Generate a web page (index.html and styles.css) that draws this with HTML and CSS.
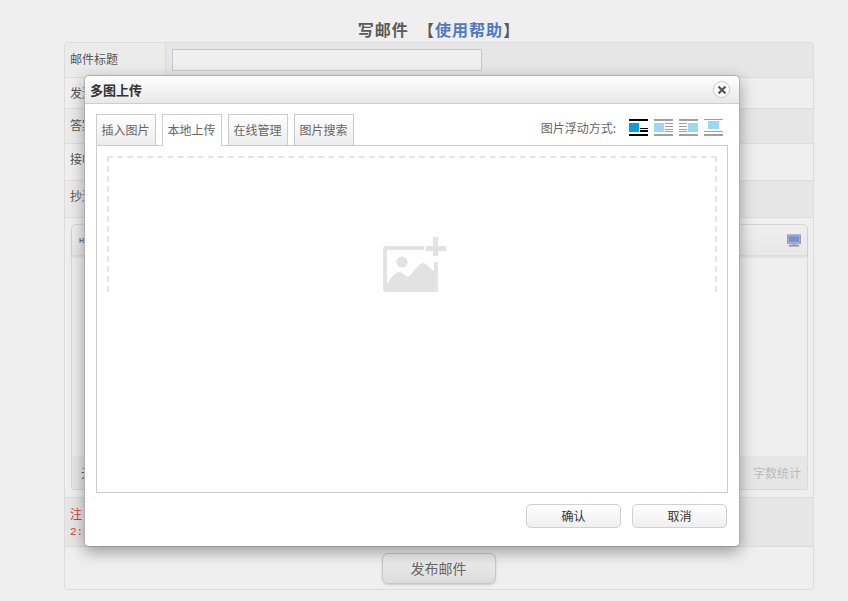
FILE: index.html
```html
<!DOCTYPE html>
<html lang="zh-CN">
<head>
<meta charset="utf-8">
<title>写邮件</title>
<link rel="stylesheet" href="styles.css">
</head>
<body>
<h1 class="page-title">写邮件 &nbsp;【<a class="help" href="#">使用帮助</a>】</h1>
<div class="form">
  <div class="row row-a h35"><div class="label">邮件标题</div><div class="value"><input class="text-input" type="text"></div></div>
  <div class="row row-b h31"><div class="label">发送人</div><div class="value"></div></div>
  <div class="row row-a h35"><div class="label">答案</div><div class="value"></div></div>
  <div class="row row-b h37"><div class="label">接收人</div><div class="value"></div></div>
  <div class="row row-a h37"><div class="label">抄送人</div><div class="value"></div></div>
  <div class="editor-row">
    <div class="editor">
      <div class="toolbar"><span class="html-btn">HTML</span>
        <svg class="monitor" width="14" height="13" viewBox="0 0 15 13"><rect x="0.500" y="0.500" width="14" height="9" fill="#a9b4d0" stroke="#8d99ad"/><rect x="2" y="2" width="11" height="6" fill="#7c8fd0"/><rect x="6" y="10" width="3" height="1" fill="#8a96ae"/><rect x="2" y="11" width="11" height="2" fill="#8a96ae"/></svg>
      </div>
      <div class="editor-body"></div>
      <div class="status"><span class="status-left">元素路径</span><span class="count">字数统计</span></div>
    </div>
  </div>
  <div class="row-a notes"><div class="note-1">注：邮件内容</div><div class="note-2">2:邮件内容</div></div>
  <div class="submit-row"><button class="submit" type="button">发布邮件</button></div>
</div>

<div class="dialog">
  <div class="dialog-head"><span class="dialog-title">多图上传</span>
    <span class="close"><svg width="10" height="10" viewBox="0 0 10 10"><path d="M1.500 1.500l7 7M8.500 1.500l-7 7" stroke="#555" stroke-width="2.200" fill="none"/></svg></span>
  </div>
  <div class="dialog-body">
    <div class="tab-bar">
      <div class="tab">插入图片</div>
      <div class="tab active">本地上传</div>
      <div class="tab">在线管理</div>
      <div class="tab">图片搜索</div>
      <div class="float-group">
        <span class="float-label">图片浮动方式:</span>
        <svg class="float-icon" width="20" height="17" viewBox="0 0 20 17"><path d="M0 0h19v2H0zM0 15h19v2H0zM11 9h8v1h-8zM11 11h8v2h-8z" fill="#000"/><rect y="4" width="10" height="9" fill="#0a9be6"/></svg>
        <svg class="float-icon" width="20" height="17" viewBox="0 0 20 17"><path d="M0 0h19v2H0zM0 15h19v2H0zM11 4h8v1h-8zM11 7h8v1h-8zM11 10h8v1h-8zM11 12h8v1h-8z" fill="#a0a0a0"/><rect y="4" width="10" height="9" fill="#9bd8f8"/></svg>
        <svg class="float-icon" width="20" height="17" viewBox="0 0 20 17"><path d="M0 0h19v2H0zM0 15h19v2H0zM0 4h8v1H0zM0 7h8v1H0zM0 10h8v1H0zM0 12h8v1H0z" fill="#a0a0a0"/><rect x="9" y="4" width="10" height="9" fill="#9bd8f8"/></svg>
        <svg class="float-icon" width="20" height="17" viewBox="0 0 20 17"><path d="M0 12h19v1H0zM0 15h19v2H0zM0 0h19v1H0z" fill="#a0a0a0"/><rect x="4" y="2" width="11" height="8" fill="#9bd8f8"/></svg>
      </div>
    </div>
    <div class="tab-panel">
      <div class="drop-zone">
        <svg class="drop-icon" width="64" height="56" viewBox="0 0 64 56">
          <path fill="#e2e2e2" d="M3 9H41V13H4V47C8 41 12 35 16 35C20 35 22 39 25 40C30 37 35 26 40 26C44 26 47 32 51 34V25H55V53a2 2 0 0 1-2 2H3a3 3 0 0 1-3-3V12a3 3 0 0 1 3-3Z"/>
          <circle cx="19" cy="25" r="5.500" fill="#e2e2e2"/>
          <path fill="#e2e2e2" d="M50 0h5v9h8v5h-8v5h-5v-5h-7V9h7z"/>
        </svg>
      </div>
    </div>
    <div class="dialog-foot">
      <button class="dlg-btn" type="button">确认</button>
      <button class="dlg-btn" type="button">取消</button>
    </div>
  </div>
</div>
</body>
</html>
```
FILE: styles.css
```css
* { box-sizing: border-box; }
html, body { margin: 0; height: 601px; overflow: hidden; }
body {
  background: #efefef;
  font-family: "Noto Sans CJK SC", "Liberation Sans", sans-serif;
  font-size: 12px;
  color: #555;
  position: relative;
}
.page-title {
  margin: 0;
  height: 42px;
  padding-top: 19px;
  text-align: center;
  font-size: 16px;
  line-height: 20px;
  font-weight: bold;
  color: #5a5a5a;
  padding-left: 30px;
  letter-spacing: 1px;
  white-space: nowrap;
}
.help { color: #5078c4; text-decoration: none; letter-spacing: 1px; }
.form {
  margin: 0 34px 0 64px;
  width: 750px;
  height: 548px;
  border: 1px solid #dcdcdc;
  border-radius: 3px;
  display: flex;
  flex-direction: column;
}
.row { display: flex; border-bottom: 1px solid #dcdcdc; }
.row-a { background: #e6e6e6; }
.row-b { background: #efefef; }
.h35 { height: 35px; }
.h31 { height: 31px; }
.h37 { height: 37px; }
.label {
  width: 101px;
  padding: 0 0 4px 5px;
  display: flex;
  align-items: center;
  border-right: 1px solid #dcdcdc;
  white-space: nowrap;
  background: #ebebeb;
}
.row-b .label { background: #efefef; }
.h31 .label { padding-bottom: 2px; }
.h37 .label { padding-bottom: 7px; }
.value { flex: 1; display: flex; align-items: center; padding-left: 6px; }
.text-input {
  width: 310px;
  height: 22px;
  background: #efefef;
  border: 1px solid #c6c6d6;
  margin: 0;
}
.editor-row { height: 280px; padding: 6px 5px 7px 6px; border-bottom: 1px solid #dcdcdc; }
.editor {
  height: 100%;
  border: 1px solid #d8d8d8;
  border-radius: 5px 5px 2px 2px;
  display: flex;
  flex-direction: column;
  background: #efefef;
}
.toolbar {
  height: 31px;
  background: linear-gradient(#efefef, #e8e8e8);
  border-bottom: 1px solid #dcdcdc;
  box-shadow: 0 1px 3px rgba(0,0,0,.1);
  display: flex;
  align-items: center;
  justify-content: space-between;
  padding: 0 6px 0 7px;
  border-radius: 5px 5px 0 0;
}
.html-btn { font: bold 7px "Liberation Sans", sans-serif; color: #5a7a9a; }
.monitor { display: block; }
.editor-body { flex: 1; }
.status {
  height: 33px;
  background: #e6e6e6;
  display: flex;
  align-items: center;
  justify-content: space-between;
  padding: 0 6px 0 9px;
}
.count { color: #bbb; }
.notes { height: 49px; border-bottom: 1px solid #dcdcdc; padding: 7px 5px 0; color: #e83a3a; }
.note-1 { line-height: 18px; }
.note-2 { font-family: "Liberation Mono", "Noto Sans CJK SC", monospace; font-size: 11px; line-height: 18px; }
.submit-row { flex: 1; display: flex; justify-content: center; align-items: flex-start; padding-top: 6px; }
.submit {
  width: 114px;
  height: 31px;
  border: 1px solid #c8c8c8;
  border-radius: 6px;
  background: linear-gradient(#efefef, #dcdcdc);
  box-shadow: 0 1px 2px rgba(0,0,0,.15);
  color: #666;
  font: 14px "Noto Sans CJK SC", sans-serif;
  padding: 0 1px 2px 0;
}
.dialog {
  position: absolute;
  left: 84px;
  top: 75px;
  width: 656px;
  height: 472px;
  background: #fff;
  border: 1px solid #b0b0b0;
  border-bottom-color: #999;
  border-radius: 5px;
  box-shadow: 0 5px 15px rgba(0,0,0,.35);
  display: flex;
  flex-direction: column;
}
.dialog-head {
  height: 28px;
  flex: none;
  background: linear-gradient(#fff, #e8e8e8);
  border-bottom: 1px solid #ccc;
  border-radius: 5px 5px 0 0;
  display: flex;
  align-items: center;
  justify-content: space-between;
  padding: 0 9px 0 5px;
}
.dialog-title { font-size: 13px; font-weight: bold; color: #333; }
.close {
  width: 17px;
  height: 17px;
  border: 1px solid #c4c4c4;
  border-radius: 50%;
  background: #fff;
  display: flex;
  align-items: center;
  justify-content: center;
}
.dialog-body { flex: 1; padding: 10px 11px 0; display: flex; flex-direction: column; }
.tab-bar { display: flex; gap: 6px; height: 32px; align-items: flex-start; position: relative; z-index: 1; }
.tab {
  width: 60px;
  height: 31px;
  border: 1px solid #ccc;
  border-bottom: none;
  background: linear-gradient(#fff, #ececec);
  color: #666;
  text-align: center;
  line-height: 29px;
  padding-right: 1px;
}
.tab.active { height: 32px; background: #fff; }
.float-group { margin-left: auto; display: flex; align-items: center; height: 26px; padding-right: 4px; }
.float-label { color: #666; margin-right: 13px; }
.float-icon { display: block; margin-left: 5px; }
.float-icon:first-of-type { margin-left: 0; }
.tab-panel { height: 348px; margin-top: -1px; border: 1px solid #ccc; padding: 10px; flex: none; }
.drop-zone {
  height: 136px;
  border: 2px dashed #e5e5e5;
  border-bottom: none;
  display: flex;
  justify-content: center;
  padding-top: 79px;
}
.drop-icon { display: block; flex: none; margin-left: 5px; }
.dialog-foot { display: flex; justify-content: flex-end; gap: 11px; padding: 11px 1px 0 0; }
.dlg-btn {
  width: 95px;
  height: 24px;
  border: 1px solid #d0d0d0;
  border-radius: 5px;
  background: linear-gradient(#fff, #efefef);
  font: 12px "Noto Sans CJK SC", sans-serif;
  color: #333;
  padding: 0 0 2px 0;
}
```
